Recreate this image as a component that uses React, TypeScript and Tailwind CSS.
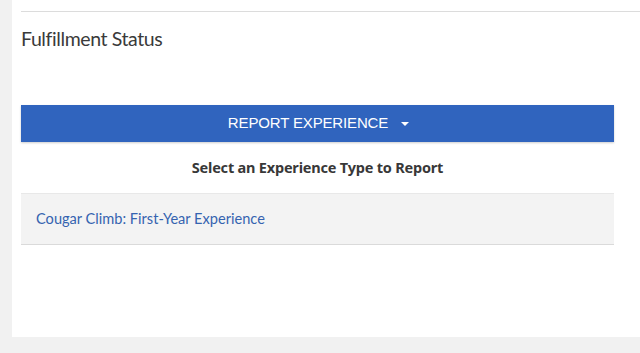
export default function App() {
  return (
    <div className="h-[353px] w-[640px] overflow-hidden bg-[#f1f1f1] pl-3">
      <div className="h-[337px] bg-white pl-[9px] pt-[11px]">
        <div className="border-t border-[#dcdcdc]" />
        <h2 className="mt-[15px] font-['Lato',sans-serif] text-[19.5px] leading-[24px] tracking-[-0.4px] text-[#3a3a3a]">
          Fulfillment Status
        </h2>
        <div className="mr-[26px] mt-[54px]">
          <button className="flex h-[37px] w-full items-center justify-center bg-[#3064be] pl-[2px] font-['Liberation_Sans',sans-serif] text-[15px] tracking-[-0.15px] text-white shadow-[0_1px_2px_rgba(0,0,0,0.2)]">
            <span>REPORT EXPERIENCE</span>
            <span className="ml-[13px] inline-block h-0 w-0 border-x-[4px] border-t-[4px] border-x-transparent border-t-white" />
          </button>
          <p className="mt-[16px] text-center font-['Noto_Sans',sans-serif] text-[14.5px] font-bold leading-[19px] tracking-[-0.2px] text-[#383838]">
            Select an Experience Type to Report
          </p>
          <div className="mt-[16px] flex h-[52px] items-center border-y border-t-[#e8e8e8] border-b-[#dadada] bg-[#f3f3f3] pl-[15px]">
            <a className="font-['Lato',sans-serif] text-[14.6px] text-[#3563b0]">
              Cougar Climb: First-Year Experience
            </a>
          </div>
        </div>
      </div>
    </div>
  );
}
